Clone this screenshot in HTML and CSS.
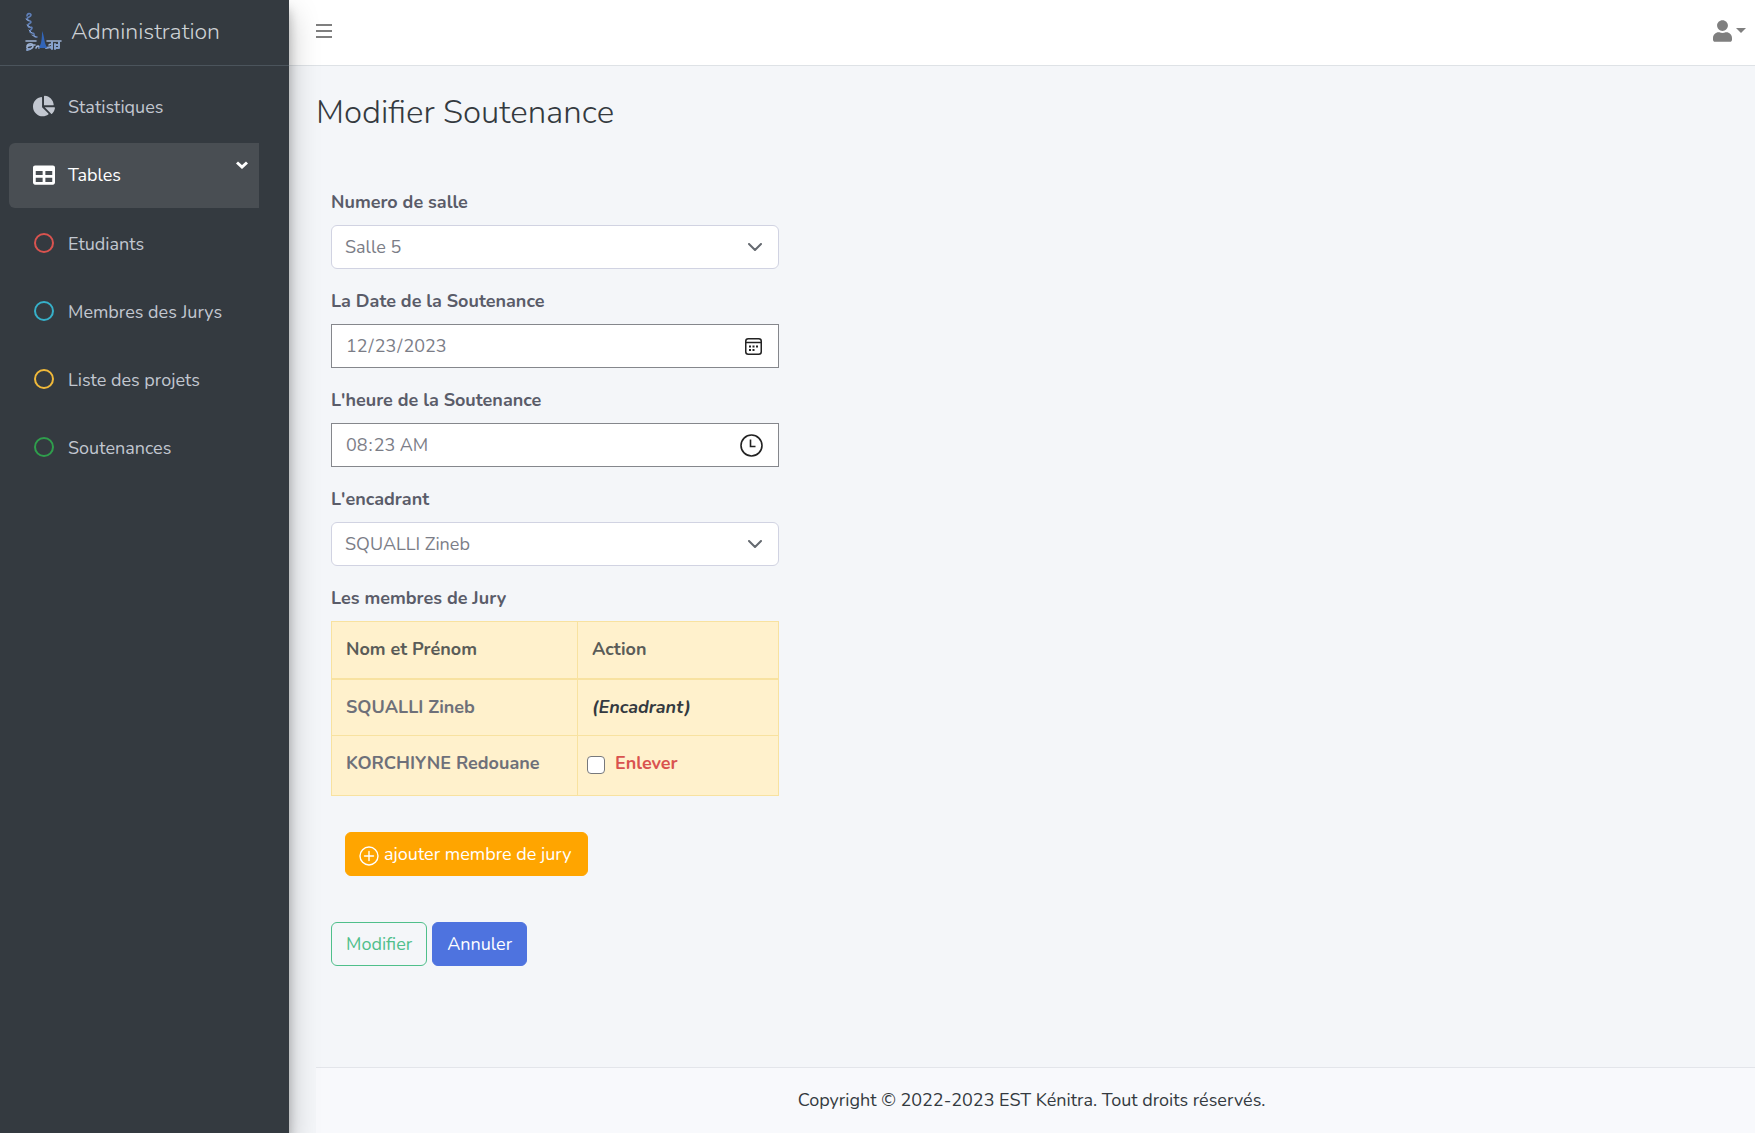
FILE: index.html
```html
<!DOCTYPE html>
<html lang="en">
<head>
<meta charset="utf-8">
<meta name="viewport" content="width=device-width, initial-scale=1">
<title>Modifier Soutenance</title>
<link rel="stylesheet" href="styles.css">
</head>
<body>
<div class="layout">
  <aside class="sidebar">
    <a class="brand" href="#">
      <svg class="brand-logo" viewBox="0 0 38 40" aria-hidden="true">
        <g fill="none" stroke-linecap="round" stroke-linejoin="round">
          <path stroke="#5f7fb8" stroke-width="1.6" d="M3 4c0-3 4-3 4-1s-4 2-4 4 4 1 4 3-4 1-3 4 4 0 4 2-3 2-2 4 4 0 4 2 0 3 3 3"/>
          <path stroke="#8ba3cc" stroke-width="1" d="M2 7l3 2M3 13l3 2M5 18l3 3M8 23l4 2"/>
          <path stroke="#9db2d4" stroke-width="1.6" d="M2 29h10M3 34c1-3 6-3 6 0s-5 4-6 2 4-3 8-3M12 36c1-3 4-2 3 0M23 29h14M25 33c2-2 4 0 2 3"/>
          <path stroke="#86a0cb" stroke-width="2" d="M3 38l3-1M28 30v7M31 32v5M31 33h4v3h-4M35 30v4M22 36l5-1"/>
        </g>
        <path fill="#3265b8" d="M18 19c2 4 2 8 3 12l2 5h-8l2-5c1-5 1-9 1-12z"/>
      </svg>
      <span>Administration</span>
    </a>
    <nav class="menu">
      <a class="menu-item" href="#">
        <svg class="menu-icon" viewBox="0 0 544 512" aria-hidden="true"><path fill="currentColor" d="M527.79 288H290.5l158.03 158.03c6.04 6.04 15.98 6.53 22.19.68 38.7-36.46 65.32-85.61 73.13-140.86 1.34-9.46-6.51-17.85-16.06-17.85zm-15.83-64.8C503.72 103.74 408.26 8.28 288.8.04 279.68-.59 272 7.1 272 16.24V240h223.77c9.14 0 16.82-7.68 16.19-16.8zM224 288V50.71c0-9.55-8.39-17.4-17.84-16.06C86.99 51.49-4.1 155.6.14 280.37 4.5 408.51 114.83 513.59 243.03 511.98c50.4-.63 96.97-16.87 135.26-44.03 7.9-5.6 8.42-17.23 1.57-24.08L224 288z"/></svg>
        <span>Statistiques</span>
      </a>
      <a class="menu-item active" href="#">
        <svg class="menu-icon" viewBox="0 0 512 512" aria-hidden="true"><path fill="currentColor" d="M464 32H48C21.49 32 0 53.49 0 80v352c0 26.51 21.49 48 48 48h416c26.51 0 48-21.49 48-48V80c0-26.51-21.49-48-48-48zM224 416H64v-96h160v96zm0-160H64v-96h160v96zm224 160H288v-96h160v96zm0-160H288v-96h160v96z"/></svg>
        <span>Tables</span>
        <svg class="menu-chevron" viewBox="0 0 12 8" aria-hidden="true"><path fill="none" stroke="currentColor" stroke-width="3" d="M1 1.500l5 4.500 5-4.500"/></svg>
      </a>
      <a class="menu-item" href="#"><span class="ring ring-red"></span><span>Etudiants</span></a>
      <a class="menu-item" href="#"><span class="ring ring-cyan"></span><span>Membres des Jurys</span></a>
      <a class="menu-item" href="#"><span class="ring ring-yellow"></span><span>Liste des projets</span></a>
      <a class="menu-item" href="#"><span class="ring ring-green"></span><span>Soutenances</span></a>
    </nav>
  </aside>

  <div class="page">
    <header class="topbar">
      <button class="icon-button" type="button" aria-label="Menu">
        <svg width="16" height="14" viewBox="0 0 16 14"><path fill="currentColor" d="M0 0h16v2H0zM0 6h16v2H0zM0 12h16v2H0z"/></svg>
      </button>
      <button class="icon-button" type="button" aria-label="Compte">
        <svg width="19" height="22" viewBox="0 0 448 512"><path fill="currentColor" d="M224 256c70.700 0 128-57.300 128-128S294.700 0 224 0 96 57.300 96 128s57.300 128 128 128zm89.600 32h-16.700c-22.200 10.200-46.900 16-72.900 16s-50.600-5.800-72.900-16h-16.700C60.200 288 0 348.200 0 422.400V464c0 26.500 21.500 48 48 48h352c26.500 0 48-21.500 48-48v-41.600c0-74.200-60.200-134.400-134.400-134.400z"/></svg>
        <svg width="10" height="5" viewBox="0 0 10 5"><path fill="currentColor" d="M0 0h10L5 5z"/></svg>
      </button>
    </header>

    <main class="content">
      <h1>Modifier Soutenance</h1>
      <form class="form">
        <div class="field">
          <label for="salle">Numero de salle</label>
          <select id="salle" class="control select"><option>Salle 5</option></select>
        </div>
        <div class="field">
          <label for="date">La Date de la Soutenance</label>
          <input id="date" class="control picker date" type="date" value="2023-12-23">
        </div>
        <div class="field">
          <label for="heure">L'heure de la Soutenance</label>
          <input id="heure" class="control picker time" type="time" value="08:23">
        </div>
        <div class="field">
          <label for="encadrant">L'encadrant</label>
          <select id="encadrant" class="control select"><option>SQUALLI Zineb</option></select>
        </div>
        <div class="field">
          <span class="label" id="jury">Les membres de Jury</span>
          <table class="jury" aria-labelledby="jury">
            <thead><tr><th>Nom et Prénom</th><th>Action</th></tr></thead>
            <tbody>
              <tr><td>SQUALLI Zineb</td><td><em>(Encadrant)</em></td></tr>
              <tr class="last"><td>KORCHIYNE Redouane</td><td class="check-cell"><label class="remove"><input type="checkbox"><span>Enlever</span></label></td></tr>
            </tbody>
          </table>
        </div>
        <button class="btn btn-add" type="button">
          <svg width="20" height="20" viewBox="0 0 20 20" aria-hidden="true"><g fill="none" stroke="currentColor" stroke-width="1.400"><circle cx="10" cy="10" r="9"/><path stroke-linecap="round" d="M10 5.500v9M5.500 10h9"/></g></svg>
          <span>ajouter membre de jury</span>
        </button>
        <div class="actions">
          <button class="btn btn-outline" type="submit">Modifier</button>
          <button class="btn btn-primary" type="button">Annuler</button>
        </div>
      </form>
    </main>

    <footer class="footer">Copyright © 2022-2023 EST Kénitra. Tout droits réservés.</footer>
  </div>
</div>
</body>
</html>
```

FILE: styles.css
```css
* { box-sizing: border-box; }

body {
  margin: 0;
  background: #f4f6f9;
  color: #343a40;
  font: 400 18px/27px Nunito, Lato, "Open Sans", sans-serif;
}

button, input, select { font: inherit; color: inherit; }

.layout { display: flex; min-height: 100vh; }

/* Sidebar */
.sidebar {
  position: relative;
  z-index: 1;
  flex: 0 0 289px;
  background: #343a40;
  box-shadow: 0 14px 28px rgba(0, 0, 0, .25), 0 10px 10px rgba(0, 0, 0, .22);
}

.brand {
  display: flex;
  align-items: center;
  gap: 9px;
  height: 66px;
  padding: 0 24px 2px;
  border-bottom: 1px solid #4b545c;
  color: #ced2d6;
  font-size: 23px;
  font-weight: 300;
  text-decoration: none;
}

.brand-logo { width: 38px; height: 40px; }

.menu {
  display: flex;
  flex-direction: column;
  gap: 4px;
  padding: 9px 30px 0 9px;
}

.menu-item {
  display: flex;
  align-items: center;
  gap: 13px;
  height: 64px;
  padding: 0 10px 0 23px;
  border-radius: 6px 0 0 6px;
  color: #c2c7d0;
  text-decoration: none;
}

.menu-item.active { height: 65px; background: #494e53; color: #fff; }
.menu-icon { width: 22px; height: 22px; margin: 0 0 2px 1px; }
.menu-chevron { width: 12px; height: 8px; margin: 0 1px 22px auto; }

.ring {
  width: 20px;
  height: 20px;
  margin: 0 1px 2px 2px;
  border: 2px solid;
  border-radius: 50%;
}

.ring-red { border-color: #d9534f; }
.ring-cyan { border-color: #36b0c9; }
.ring-yellow { border-color: #f0b93a; }
.ring-green { border-color: #2f9e4c; }

/* Top bar */
.page { flex: 1; display: flex; flex-direction: column; min-width: 0; }

.topbar {
  display: flex;
  align-items: center;
  justify-content: space-between;
  height: 66px;
  padding: 0 9px 4px 27px;
  border-bottom: 1px solid #dee2e6;
  background: #fff;
}

.icon-button {
  display: flex;
  align-items: center;
  gap: 4px;
  padding: 0;
  border: 0;
  background: none;
  color: #7f7f7f;
}

/* Form */
.content { flex: 1; padding: 27px; }

h1 {
  margin: 0 0 56px;
  font-size: 33px;
  line-height: 40px;
  font-weight: 300;
}

.form { width: 448px; margin-left: 15px; }

.field { display: flex; flex-direction: column; gap: 9px; margin-bottom: 19px; }
.field > label, .label { color: #5a5c69; font-weight: 700; }

.control {
  width: 100%;
  height: 44px;
  padding: 0 13px;
  border: 1px solid #d1d3e2;
  background-color: #fff;
  color: #7b7d87;
}

.select {
  appearance: none;
  border-radius: 6px;
  background-image: url("data:image/svg+xml,%3Csvg xmlns='http://www.w3.org/2000/svg' viewBox='0 0 14 8'%3E%3Cpath fill='none' stroke='%23656a70' stroke-width='2' stroke-linecap='round' stroke-linejoin='round' d='M1 1l6 6 6-6'/%3E%3C/svg%3E");
  background-repeat: no-repeat;
  background-position: right 16px center;
  background-size: 14px 8px;
}

.picker { border-color: #85878c; border-radius: 0; }
.picker::-webkit-datetime-edit-fields-wrapper { padding: 0; }
.picker::-webkit-calendar-picker-indicator {
  padding: 0;
  background-position: center;
  background-repeat: no-repeat;
  background-size: contain;
}

.date::-webkit-calendar-picker-indicator {
  width: 17px;
  height: 17px;
  margin-right: 3px;
  background-image: url("data:image/svg+xml,%3Csvg xmlns='http://www.w3.org/2000/svg' viewBox='0 0 17 17'%3E%3Cg fill='none' stroke='%23222' stroke-width='1.500'%3E%3Crect x='.75' y='.75' width='15.500' height='15.500' rx='2.500'/%3E%3Cpath d='M1 4.500h15'/%3E%3C/g%3E%3Cpath fill='%23222' d='M4 7.500h2v2H4zM7.500 7.500h2v2h-2zM11 7.500h2v2h-2zM4 11h2v2H4zM7.500 11h2v2h-2z'/%3E%3C/svg%3E");
}

.time::-webkit-calendar-picker-indicator {
  width: 23px;
  height: 23px;
  margin-right: 2px;
  background-image: url("data:image/svg+xml,%3Csvg xmlns='http://www.w3.org/2000/svg' viewBox='0 0 23 23'%3E%3Cg fill='none' stroke='%23222' stroke-width='1.600'%3E%3Ccircle cx='11.500' cy='11.500' r='10.500'/%3E%3Cpath d='M10.500 5.500v7h5'/%3E%3C/g%3E%3C/svg%3E");
}

/* Jury table */
.jury {
  width: 100%;
  border-collapse: collapse;
  table-layout: fixed;
  background: #fff1cc;
  color: #6e7079;
  font-weight: 700;
}

.jury th, .jury td {
  height: 57px;
  padding: 0 14px;
  border: 1px solid #f8e2a0;
  text-align: left;
}

.jury th { border-bottom-width: 2px; color: #5a5c58; }
.jury th:first-child { width: 246px; }
.jury .last td { height: 60px; padding-bottom: 4px; }
.jury em { color: #343a40; }
.jury .check-cell { padding-left: 9px; }

.remove { display: flex; align-items: center; gap: 10px; color: #d9534f; }

.remove input {
  appearance: none;
  width: 18px;
  height: 18px;
  margin: 2px 0 0;
  border: 1px solid #77797c;
  border-radius: 4px;
  background: #fff;
}

.remove input:checked { background: #4e73df; }

/* Buttons */
.btn {
  height: 44px;
  padding: 0 14px;
  border: 1px solid;
  border-radius: 6px;
}

.btn-add {
  display: flex;
  align-items: center;
  gap: 5px;
  margin: 36px 0 46px 14px;
  padding: 0 15px 0 13px;
  border-color: #ffa500;
  background: #ffa500;
  color: #fff;
}

.btn-add svg { margin-top: 4px; }
.actions { display: flex; gap: 5px; }
.btn-outline { border-color: #4fbf8b; background: none; color: #4fbf8b; }
.btn-primary { border-color: #4e73df; background: #4e73df; color: #fff; }

/* Footer */
.footer {
  margin-left: 27px;
  padding: 19px 8px 19px 0;
  border-top: 1px solid #e3e5ea;
  background: #f8f9fc;
  text-align: center;
}
```
